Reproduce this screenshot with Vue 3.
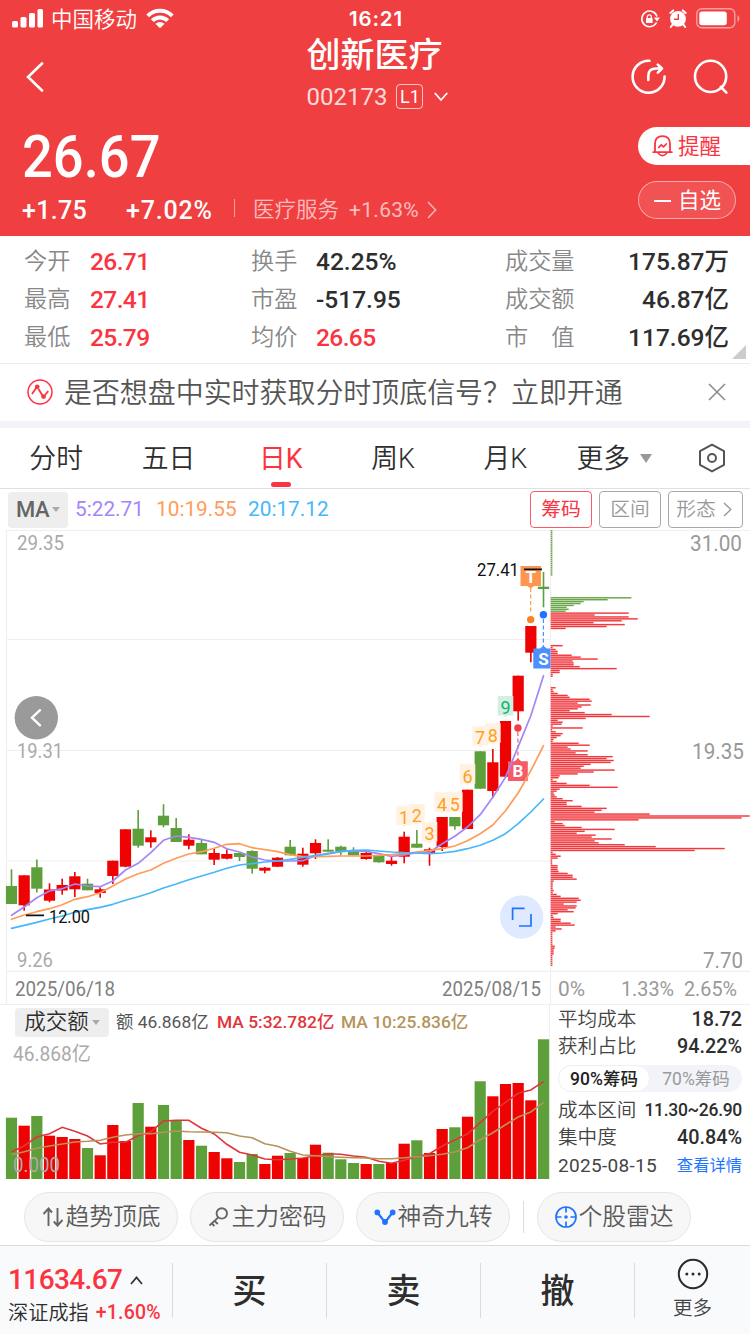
<script setup>
import { ref } from 'vue'

const stats = [
  ['今开', '26.71', true, '换手', '42.25%', false, '成交量', '175.87万'],
  ['最高', '27.41', true, '市盈', '-517.95', false, '成交额', '46.87亿'],
  ['最低', '25.79', true, '均价', '26.65', true, '市　值', '117.69亿'],
]

const tabs = ['分时', '五日', '日K', '周K', '月K']
const activeTab = ref('日K')
const chipRange = ref('90%')

const STEP = 12.667
const cx = (i) => 11.5 + i * STEP

// [up, wick top, body top, body bottom, wick bottom, volume top]
const candles = [
  [0, 869.3, 886, 904, 904, 1117.7],
  [1, 875.3, 875.3, 905.3, 910.7, 1125.7],
  [0, 859.5, 867.3, 888.7, 892.5, 1116],
  [1, 883.3, 889.5, 900.7, 902.3, 1135.7],
  [1, 878.7, 885, 890.5, 894.7, 1137],
  [1, 872, 876.3, 889.3, 897, 1139],
  [0, 878.7, 883.7, 890.3, 890.3, 1148],
  [1, 887.3, 889.3, 893, 897.7, 1155.3],
  [1, 860.7, 860.7, 876, 884, 1125],
  [1, 829.3, 829.3, 866.7, 867.3, 1141],
  [0, 810, 828.7, 845.7, 847.7, 1103],
  [1, 830.3, 837.3, 842.3, 847.7, 1126.7],
  [0, 804.3, 815.7, 825.3, 827.3, 1105],
  [0, 818, 828, 842, 842, 1120.7],
  [1, 834.3, 839.7, 845.7, 849.3, 1140],
  [0, 840, 843, 854.3, 854.3, 1145.7],
  [1, 848.7, 853, 859.7, 865, 1152],
  [1, 849.3, 854, 858.7, 859.3, 1158.3],
  [0, 853, 853, 857, 861, 1162],
  [0, 850.3, 851, 868.7, 873.7, 1154],
  [1, 867, 867.7, 870.7, 873.3, 1164],
  [1, 857, 857.7, 866.7, 867, 1155.7],
  [0, 840, 846.7, 855.3, 855.3, 1153],
  [1, 847.7, 853.7, 864.7, 866.7, 1158],
  [1, 839.3, 843, 853.3, 859, 1144.7],
  [0, 839.3, 849.7, 851.7, 851.7, 1152.7],
  [0, 845.7, 846.7, 851, 855.3, 1159.3],
  [0, 847.3, 850.7, 855.3, 855.3, 1163],
  [1, 851, 853, 859, 859.7, 1164],
  [0, 855, 855, 862.3, 862.7, 1164],
  [1, 856, 860.7, 864, 865.7, 1163],
  [1, 831.7, 836.7, 856.7, 863.3, 1143.7],
  [0, 830, 843.7, 847.7, 847.7, 1140.3],
  [1, 847.7, 849.3, 853, 865.7, 1153],
  [1, 817, 817, 847, 851, 1129],
  [0, 817, 817, 826.3, 829.7, 1127.3],
  [1, 789.7, 789.7, 829, 829, 1116.7],
  [0, 751.3, 751.3, 788.7, 788.7, 1081.3],
  [1, 749, 762.3, 791, 797.3, 1096.3],
  [1, 721, 721, 776.7, 776.7, 1084],
  [1, 675.7, 675.7, 711.3, 720.7, 1083],
  [1, 626, 626, 652.7, 662.3, 1100.3],
  [0, 572, 586.7, 589, 607.3, 1039.3],
]

const line = (ys) => ys.map((y, i) => `${cx(i).toFixed(1)},${y}`).join(' ')

const ma5 = line([
  915.3, 907, 897.7, 891, 888.7, 884, 886, 886.7, 881, 870, 863.3, 852.7, 840.3, 836, 837.3,
  839.3, 842.3, 848.7, 852, 857, 860, 861, 861, 860.7, 855.7, 853.3, 851.3, 851, 851.3, 853.7,
  856.3, 855, 852.7, 852.3, 843.7, 836.3, 827, 814.7, 797.3, 777.3, 746.7, 715.7, 675.7,
])
const ma10 = line([
  919.3, 915, 911.7, 908.7, 904.7, 899.3, 896.7, 892.7, 886, 879, 873.7, 870, 863.3, 858.3, 854,
  851.7, 848.3, 844.3, 843.7, 847.7, 849.7, 851.7, 854.7, 856.7, 856.7, 856.3, 856, 856, 856, 855.3,
  854.7, 853.7, 852, 850.7, 848.7, 846, 840.7, 833.7, 825, 810.7, 793, 770.7, 745.7,
])
const ma20 = line([
  928.3, 925.3, 922.3, 919, 916, 912.3, 909.7, 907.3, 904.3, 900.3, 896.7, 892.7, 888, 884, 879.7,
  876, 872.3, 868.3, 865, 863.7, 862, 861, 859.3, 857.3, 855.7, 854, 851.7, 850.3, 850, 851,
  852, 852.7, 853, 853.7, 853, 851.3, 848.7, 845.3, 840.3, 833.7, 823.7, 812, 799,
])
const volMa5 = line([
  1152, 1145.7, 1137, 1133.7, 1127.3, 1131.3, 1136, 1144, 1142.3, 1142.3, 1135.7, 1131.7, 1121, 1120.3, 1120.3,
  1128.3, 1134, 1144.3, 1152.3, 1155, 1159, 1159.7, 1159, 1158, 1156, 1153.7, 1154.3, 1156, 1157.3, 1161.3,
  1163.3, 1160.3, 1156.7, 1153.7, 1146, 1140, 1134, 1122.7, 1111.3, 1102.3, 1093.3, 1090, 1081.7,
])
const volMa10 = line([
  1154.7, 1151.7, 1148.3, 1146, 1144, 1142, 1141.3, 1140.3, 1137.3, 1135, 1133.7, 1133.7, 1132.3, 1131, 1131.7,
  1132, 1132.3, 1132.7, 1136, 1137.7, 1143.7, 1146.3, 1151.3, 1155, 1155.7, 1156.7, 1157.3, 1157.7, 1158, 1158.7,
  1158.7, 1157.7, 1156.7, 1155.7, 1154.3, 1152, 1147.7, 1139.7, 1132.7, 1124.7, 1117, 1112, 1102.3,
])

// nine-turn counters above the candles
const turns = [
  [31, 1, 805.7], [32, 2, 804], [33, 3, 822], [34, 4, 792.3], [35, 5, 792.3],
  [36, 6, 764.3], [37, 7, 726], [38, 8, 723.3], [39, 9, 696],
]

// chip distribution, one length per price level
const chips = [
  ...Array(24).fill(1.7), ...Array(11).fill(0),
  80.7, 57, 33, 30, 23, 16, 18, 15, 78, 44, 78, 87, 71, 43, 74, 56, 15,
  ...Array(8).fill(0),
  12, 2, 5, 7, 7, 21, 30, 47, 22, 23, 23, 29, 66, 9, 9, 2, 2,
  ...Array(5).fill(0),
  5, 2, 3, 7, 17, 19, 39, 41, 27, 40, 31, 27, 19, 34, 61, 99, 35, 7, 12, 11, 2, 32, 1.5, 5, 12, 10, 6, 3, 2,
  28, 39, 17, 20, 37, 25, 37, 62, 56, 63, 60, 40, 33, 30, 64, 43, 27, 9, 8, 2, 6, 16, 39, 67, 9, 6, 3, 4, 6,
  12, 22, 16, 16, 31, 56, 51, 44, 99, 199, 191, 88, 4, 12, 14, 31, 64, 34, 26, 45, 41, 61, 44, 48, 74, 105,
  174, 144, 2, 5, 10, 7, 1.5, 1.5, 1.5, 7, 7, 7, 8, 17, 22, 22, 26, 3, 2, 2, 2, 2, 3, 2, 6, 10, 28, 30, 26,
  13, 26, 25, 17, 23, 7, 2, 3, 10, 10, 20, 24, 5, 11, 5,
  ...Array(7).fill(1.7), 4, 4, 3, 3, 3, ...Array(6).fill(1.7),
]
</script>

<template>
  <div class="page">
    <header class="header">
      <div class="status">
        <div class="status-left">
          <svg width="32" height="20" viewBox="0 0 32 20" fill="#fff">
            <rect x="0" y="13" width="6" height="6.5" rx="1.6" />
            <rect x="8.5" y="9" width="6" height="10.5" rx="1.6" />
            <rect x="17" y="5" width="6" height="14.5" rx="1.6" />
            <rect x="25.5" y="1" width="5.5" height="18.5" rx="1.6" />
          </svg>
          <span class="carrier">中国移动</span>
          <svg width="28" height="21" viewBox="0 0 28 21" fill="none" stroke="#fff" stroke-width="3.9">
            <path d="M1.7 7.8 A17.5 17.5 0 0 1 26.3 7.8" />
            <path d="M6.3 12.6 A11 11 0 0 1 21.7 12.6" />
            <path d="M14 20.2 L9.4 15.8 A6.6 6.6 0 0 1 18.6 15.8 Z" fill="#fff" stroke="none" />
          </svg>
        </div>
        <span class="clock">16:21</span>
        <div class="status-right">
          <svg width="20" height="20" viewBox="0 0 20 20">
            <path d="M16.5 13.5 A7.8 7.8 0 1 1 17 7.4" fill="none" stroke="#fff" stroke-width="1.6" />
            <path d="M13.8 8.4 H20 L17 12.4 Z" fill="#fff" />
            <rect x="6" y="9" width="6.6" height="5" rx=".6" fill="#fff" />
            <path d="M7.3 9.4 V7.8 a2 2 0 0 1 4 0 V9.4" fill="none" stroke="#fff" stroke-width="1.2" />
          </svg>
          <svg width="18" height="19" viewBox="0 0 18 19">
            <circle cx="9" cy="9.8" r="7.9" fill="#fff" />
            <path d="M1.4 4 L4.2 1.4 M16.6 4 L13.8 1.4 M3.6 15.6 L1.8 18 M14.4 15.6 L16.2 18" stroke="#fff" stroke-width="2" stroke-linecap="round" />
            <path d="M9.3 5 V10.3 H5" fill="none" stroke="#f03f41" stroke-width="1.4" />
          </svg>
          <svg width="44" height="21" viewBox="0 0 44 21">
            <rect x=".8" y=".8" width="38" height="19" rx="5" fill="none" stroke="#fff" stroke-opacity=".5" stroke-width="1.4" />
            <rect x="3.3" y="3.4" width="27.5" height="13.8" rx="2.6" fill="#fff" />
            <path d="M41.5 7 q2 1.2 2 3.5 t-2 3.5 Z" fill="#fff" fill-opacity=".5" />
          </svg>
        </div>
      </div>

      <div class="nav">
        <svg class="back" width="18" height="30" viewBox="0 0 18 30" fill="none" stroke="#fff" stroke-width="2.6" stroke-linecap="round">
          <path d="M16 1.5 L2 15 L16 28.5" />
        </svg>
        <div class="title">
          <h1>创新医疗</h1>
          <div class="code">
            <span class="code-num">002173</span>
            <span class="level">L1</span>
            <svg width="14" height="10" viewBox="0 0 14 10" fill="none" stroke="#fff" stroke-width="1.8">
              <path d="M.8 1 L7 8 L13.2 1" />
            </svg>
          </div>
        </div>
        <div class="nav-icons">
          <svg width="36" height="36" viewBox="0 0 36 36" fill="none" stroke="#fff" stroke-width="2.6" stroke-linecap="round" stroke-linejoin="round">
            <path d="M18.4 1.8 A16 16 0 1 0 33.6 17.5" />
            <path d="M17.3 21 V17 Q17.3 9.5 25 9.5 H30.6 M26.8 5.6 L31 9.5 L26.8 13.6" />
          </svg>
          <svg width="36" height="36" viewBox="0 0 36 36" fill="none" stroke="#fff" stroke-width="2.6" stroke-linecap="round">
            <circle cx="17.6" cy="17.4" r="15.6" />
            <path d="M27.8 28 L33.4 33.6" />
          </svg>
        </div>
      </div>

      <div class="quote">
        <div class="quote-main">
          <div class="price">26.67</div>
          <div class="change">
            <span class="diff">+1.75</span>
            <span class="pct">+7.02%</span>
            <i class="bar"></i>
            <span class="sector">医疗服务</span>
            <span class="sector-pct">+1.63%</span>
            <svg width="10" height="18" viewBox="0 0 10 18" fill="none" stroke="#fff" stroke-opacity=".6" stroke-width="1.6">
              <path d="M1 1 L8.6 9 L1 17" />
            </svg>
          </div>
        </div>
        <div class="quote-actions">
          <button class="remind">
            <svg width="21" height="22" viewBox="0 0 21 22" fill="none" stroke="#fb3442" stroke-width="1.8" stroke-linecap="round" stroke-linejoin="round">
              <path d="M3 17 V9 Q3 1.2 10.5 1.2 T18 9 V17 M1.2 17.2 H19.8" />
              <path d="M6.5 18.5 Q10.5 22.8 14.5 18.5" />
              <path d="M6.8 12.4 L9.3 9.8 L11.5 11.8 L14.2 9" />
            </svg>
            <span>提醒</span>
          </button>
          <button class="watch"><i class="minus"></i>自选</button>
        </div>
      </div>
    </header>

    <section class="stats">
      <div v-for="row in stats" :key="row[0]" class="stat-row">
        <span class="label">{{ row[0] }}</span>
        <span class="value" :class="{ up: row[2] }">{{ row[1] }}</span>
        <span class="label">{{ row[3] }}</span>
        <span class="value" :class="{ up: row[5] }">{{ row[4] }}</span>
        <span class="label">{{ row[6] }}</span>
        <span class="value right">{{ row[7] }}</span>
      </div>
      <i class="corner"></i>
    </section>

    <section class="banner">
      <svg width="26" height="26" viewBox="0 0 26 26" fill="none" stroke="#fb3442" stroke-width="1.5">
        <circle cx="13" cy="13" r="12" />
        <path d="M5 15 L9.5 8.5 M11.5 10 L15.5 16.5 M18 16 L21.3 12.2" stroke-width="1.8" />
        <circle cx="10.2" cy="7.8" r="2.4" fill="#fb3442" stroke="none" />
        <circle cx="16.6" cy="17.6" r="2.4" fill="#fb3442" stroke="none" />
      </svg>
      <span class="banner-text">是否想盘中实时获取分时顶底信号？立即开通</span>
      <svg width="18" height="18" viewBox="0 0 18 18" stroke="#888" stroke-width="1.5">
        <path d="M1 1 L17 17 M17 1 L1 17" />
      </svg>
    </section>

    <nav class="tabs">
      <div v-for="t in tabs" :key="t" class="tab" :class="{ active: t === activeTab }" @click="activeTab = t">{{ t }}</div>
      <div class="more">更多<i class="tri"></i></div>
      <svg width="28" height="30" viewBox="0 0 28 30" fill="none" stroke="#555" stroke-width="2" stroke-linejoin="round">
        <path d="M14 1.6 L26 8.2 V21.8 L14 28.4 L2 21.8 V8.2 Z" />
        <circle cx="14" cy="15" r="4" />
      </svg>
    </nav>

    <section class="toolbar">
      <div class="ma-chip">MA<i class="tri small"></i></div>
      <span class="ma purple">5:22.71</span>
      <span class="ma orange">10:19.55</span>
      <span class="ma blue">20:17.12</span>
      <div class="tool-btns">
        <button class="tool on">筹码</button>
        <button class="tool">区间</button>
        <button class="tool wide">
          形态
          <svg width="9" height="15" viewBox="0 0 9 15" fill="none" stroke="#999" stroke-width="1.4">
            <path d="M1 1 L7.8 7.5 L1 14" />
          </svg>
        </button>
      </div>
    </section>

    <svg class="chart" width="750" height="474" viewBox="0 530 750 474">
      <g stroke="#efefef" stroke-width="1.2">
        <path d="M6 530.5 H750 M6 639.5 H550 M6 750.5 H550 M6 861 H550 M6 971.3 H750" />
        <path d="M6.5 530 V1004 M550.5 530 V1004" />
      </g>

      <g class="axis">
        <text x="17" y="550" textLength="47" lengthAdjust="spacingAndGlyphs">29.35</text>
        <text x="17" y="758.3" textLength="46" lengthAdjust="spacingAndGlyphs">19.31</text>
        <text x="17" y="966.6" textLength="36" lengthAdjust="spacingAndGlyphs">9.26</text>
      </g>

      <!-- chip distribution -->
      <template v-for="(w, k) in chips" :key="'c' + k">
        <rect v-if="w" x="550.7" :y="530.1 + k * 1.914" :width="w" height="1.45" :fill="k < 43 ? '#6aa64a' : '#f2393e'" />
      </template>

      <!-- candles -->
      <g v-for="(c, i) in candles" :key="'k' + i" :fill="c[0] ? '#ee0202' : '#5d9f3b'">
        <rect :x="cx(i) - 0.8" :y="c[1]" width="1.6" :height="c[4] - c[1]" />
        <rect :x="cx(i) - 5.6" :y="c[2]" width="11.2" :height="c[3] - c[2]" />
      </g>

      <g v-for="[i, n, y] in turns" :key="'t' + n">
        <path :d="`M${cx(i) - 7.8} ${y} h15.6 v19.5 h-5.8 l-2 2 l-2 -2 h-5.8 Z`" :fill="n === 9 ? '#d3efe2' : '#fff2e2'" />
        <text class="turn" :x="cx(i)" :y="y + 18.2" :fill="n === 9 ? '#12b36b' : '#ffa022'">{{ n }}</text>
      </g>

      <!-- B / T / S markers -->
      <path d="M517.9 732 V760" stroke="#f65a66" stroke-width="1.2" stroke-dasharray="4 2.5" />
      <circle cx="517.9" cy="728" r="3.7" fill="#f33e49" />
      <path d="M508 761.3 H514.5 L517.9 758.5 L521.3 761.3 H527.8 V781 H508 Z" fill="#f65a66" />
      <text class="mark" x="517.9" y="777.3">B</text>

      <path d="M530.7 588 V613" stroke="#ff9650" stroke-width="1.2" stroke-dasharray="4 2.5" />
      <circle cx="530.7" cy="619.6" r="3.7" fill="#ff8024" />
      <path d="M520.5 566 H541 V586 H534 L530.7 588.6 L527.4 586 H520.5 Z" fill="#ff9650" />
      <text class="mark" x="530.7" y="582.5">T</text>

      <path d="M543.4 619 V646" stroke="#4a90ff" stroke-width="1.2" stroke-dasharray="4 2.5" />
      <circle cx="543.4" cy="614.8" r="3.7" fill="#1e73ff" />
      <path d="M533.3 648.5 H540 L543.4 645.7 L546.8 648.5 H550.5 V668.4 H533.3 Z" fill="#4a90ff" />
      <text class="mark" x="543.4" y="664.5">S</text>

      <g fill="none" stroke-width="1.7" stroke-linejoin="round" stroke-linecap="round">
        <polyline :points="ma5" stroke="#a586f6" />
        <polyline :points="ma10" stroke="#ff9c58" />
        <polyline :points="ma20" stroke="#45b8fc" />
      </g>

      <path d="M524 569.4 H542 M26 915.4 H44" stroke="#111" stroke-width="1.6" />
      <text class="peak" x="477" y="576.3" textLength="42" lengthAdjust="spacingAndGlyphs">27.41</text>
      <text class="peak" x="49" y="922.6" textLength="41" lengthAdjust="spacingAndGlyphs">12.00</text>

      <g class="scale">
        <text x="690" y="551" textLength="52" lengthAdjust="spacingAndGlyphs">31.00</text>
        <text x="692" y="759.3" textLength="52" lengthAdjust="spacingAndGlyphs">19.35</text>
        <text x="703" y="967.7" textLength="40" lengthAdjust="spacingAndGlyphs">7.70</text>
      </g>
      <g class="percent">
        <text x="558" y="995.5" textLength="27" lengthAdjust="spacingAndGlyphs">0%</text>
        <text x="621" y="995.5" textLength="53" lengthAdjust="spacingAndGlyphs">1.33%</text>
        <text x="684" y="995.5" textLength="53" lengthAdjust="spacingAndGlyphs">2.65%</text>
      </g>
      <g class="date">
        <text x="15" y="995.5" textLength="100" lengthAdjust="spacingAndGlyphs">2025/06/18</text>
        <text x="442" y="995.5" textLength="99" lengthAdjust="spacingAndGlyphs">2025/08/15</text>
      </g>

      <circle cx="36.3" cy="717.7" r="21.7" fill="#8c8c8c" fill-opacity=".88" />
      <path d="M40 710.2 L32 717.7 L40 725.3" fill="none" stroke="#fff" stroke-width="2.4" stroke-linecap="round" />
      <circle cx="521.7" cy="917" r="21.7" fill="#dfe9ff" />
      <path d="M524.6 908.4 H512.6 V920 M519 926 H531 V914" fill="none" stroke="#1e73ff" stroke-width="1.7" />
    </svg>

    <section class="volume">
      <div class="vol-left">
        <div class="vol-head">
          <div class="vol-chip">成交额<i class="tri small"></i></div>
          <span class="v1">额 46.868亿</span>
          <span class="v2">MA 5:32.782亿</span>
          <span class="v3">MA 10:25.836亿</span>
        </div>
        <svg class="vol-chart" width="550" height="144" viewBox="0 1036 550 144">
          <rect v-for="(c, i) in candles" :key="i" :x="cx(i) - 5.6" :y="c[5]" width="11.2" :height="1179 - c[5]" :fill="c[0] ? '#ee0202' : '#5d9f3b'" />
          <polyline :points="volMa5" fill="none" stroke="#e0353a" stroke-width="1.6" />
          <polyline :points="volMa10" fill="none" stroke="#b5935a" stroke-width="1.6" />
          <g class="axis">
            <text x="13" y="1061" textLength="78" lengthAdjust="spacingAndGlyphs">46.868亿</text>
            <text x="13" y="1172.3" textLength="47" lengthAdjust="spacingAndGlyphs">0.000</text>
          </g>
        </svg>
      </div>
      <div class="vol-right">
        <div class="info"><span>平均成本</span><b>18.72</b></div>
        <div class="info"><span>获利占比</span><b>94.22%</b></div>
        <div class="switch">
          <span v-for="r in ['90%', '70%']" :key="r" :class="{ on: r === chipRange }" @click="chipRange = r">{{ r }}筹码</span>
        </div>
        <div class="info"><span>成本区间</span><b class="tight">11.30~26.90</b></div>
        <div class="info"><span>集中度</span><b>40.84%</b></div>
        <div class="info last"><span class="day">2025-08-15</span><a>查看详情</a></div>
      </div>
    </section>

    <section class="tools">
      <button class="pill">
        <svg width="24" height="24" viewBox="0 0 24 24" fill="none" stroke="#666" stroke-width="1.9">
          <path d="M7.5 21 V4 M2.5 9 L7.5 3.5 L11 7.5 M16.5 3 V20 M12.8 16.5 L16.5 20.5 L21.5 15" />
        </svg>
        <span>趋势顶底</span>
      </button>
      <button class="pill">
        <svg width="24" height="24" viewBox="0 0 24 24" fill="none" stroke="#666" stroke-width="1.9">
          <circle cx="14.8" cy="8.4" r="5.2" />
          <path d="M11.3 12.4 L2.5 20.5 M7.6 15.8 L10.8 19 M4.8 18.4 L7.4 21" />
        </svg>
        <span>主力密码</span>
      </button>
      <button class="pill">
        <svg width="24" height="24" viewBox="0 0 24 24" fill="#1e73ff">
          <path d="M4.5 7.5 L12 17.5 L19.5 7.5" fill="none" stroke="#1e73ff" stroke-width="2.2" />
          <circle cx="4.3" cy="7.4" r="2.8" />
          <circle cx="12" cy="17" r="2.9" />
          <circle cx="19.7" cy="7.4" r="2.8" />
        </svg>
        <span>神奇九转</span>
      </button>
      <i class="split"></i>
      <button class="pill">
        <svg width="24" height="24" viewBox="0 0 24 24" fill="none" stroke="#1e73ff" stroke-width="1.7">
          <circle cx="12" cy="12" r="10" />
          <path d="M12 2 V7.5 M12 16.5 V22 M2 12 H7.5 M16.5 12 H22" />
          <circle cx="12" cy="12" r="1.8" fill="#1e73ff" stroke="none" />
        </svg>
        <span>个股雷达</span>
      </button>
    </section>

    <footer class="bottom">
      <div class="index">
        <div class="index-top">
          <span class="index-num">11634.67</span>
          <svg width="13" height="9" viewBox="0 0 13 9" fill="none" stroke="#333" stroke-width="1.8">
            <path d="M1 8 L6.5 1.5 L12 8" />
          </svg>
        </div>
        <div class="index-sub">深证成指<span>+1.60%</span></div>
      </div>
      <div class="act">买</div>
      <div class="act">卖</div>
      <div class="act">撤</div>
      <div class="act-more">
        <svg width="32" height="32" viewBox="0 0 32 32">
          <circle cx="16" cy="16" r="14.2" fill="none" stroke="#2b2b2b" stroke-width="2" />
          <g fill="#2b2b2b">
            <circle cx="9.8" cy="16" r="1.5" />
            <circle cx="16" cy="16" r="1.5" />
            <circle cx="22.2" cy="16" r="1.5" />
          </g>
        </svg>
        <span>更多</span>
      </div>
    </footer>
  </div>
</template>

<style>
body {
  margin: 0;
  background: #fff;
}
</style>

<style scoped>
.page {
  width: 750px;
  height: 1334px;
  overflow: hidden;
  display: flex;
  flex-direction: column;
  font-family: Roboto, "Noto Sans CJK SC", sans-serif;
  color: #2e2e2e;
  line-height: 1;
  white-space: nowrap;
}

svg {
  display: block;
  flex: none;
}

button {
  font-family: inherit;
  line-height: 1;
  padding: 0;
  box-sizing: border-box;
  cursor: pointer;
  white-space: nowrap;
}

.header {
  height: 236px;
  background: #f03f41;
  color: #fff;
}

.status {
  height: 36px;
  display: grid;
  grid-template-columns: 1fr auto 1fr;
  align-items: center;
  padding: 0 10px 0 12px;
}

.status-left,
.status-right {
  display: flex;
  align-items: center;
}

.carrier {
  font-size: 21.5px;
  font-weight: 350;
  margin: 3px 9px 0 7px;
}

.clock {
  font-family: Inter, sans-serif;
  font-size: 20.5px;
  font-weight: 600;
  letter-spacing: 0.8px;
  padding-top: 2px;
}

.status-right {
  justify-content: flex-end;
  gap: 9px;
  padding-top: 1px;
}

.nav {
  height: 82px;
  display: grid;
  grid-template-columns: 1fr auto 1fr;
  align-items: center;
  padding: 0 21px 0 26px;
}

.title {
  width: 142px;
}

h1 {
  margin: 0;
  height: 38px;
  line-height: 39px;
  font-size: 34px;
  font-weight: 500;
}

.code {
  height: 44px;
  display: flex;
  align-items: center;
  padding-top: 2px;
  box-sizing: border-box;
}

.code-num {
  font-size: 24px;
  opacity: 0.8;
}

.level {
  margin: -2px 11px 0 9px;
  width: 25px;
  height: 23px;
  border: 1px solid rgba(255, 255, 255, 0.7);
  border-radius: 4px;
  font-size: 18px;
  line-height: 24px;
  text-align: center;
}

.nav-icons {
  display: flex;
  justify-content: flex-end;
  gap: 26px;
}

.quote {
  display: flex;
  justify-content: space-between;
}

.quote-main {
  padding: 10px 0 0 22px;
}

.price {
  height: 58px;
  line-height: 57px;
  font-size: 59px;
  font-weight: 500;
  transform: scaleX(0.92);
  transform-origin: 0 50%;
}

.change {
  margin-top: 10px;
  height: 28px;
  display: flex;
  align-items: center;
  font-weight: 500;
}

.diff {
  width: 104px;
  font-size: 25px;
  letter-spacing: 0.3px;
}

.pct {
  width: 108px;
  font-size: 25px;
  letter-spacing: 0.8px;
}

.bar {
  width: 1px;
  height: 18px;
  background: rgba(255, 255, 255, 0.5);
  margin-top: -4px;
}

.sector {
  margin-left: 18px;
  font-size: 21.5px;
  font-weight: 350;
  opacity: 0.65;
}

.sector-pct {
  margin: 0 8px 0 10px;
  font-size: 21px;
  font-weight: 400;
  letter-spacing: 0.3px;
  opacity: 0.65;
}

.quote-actions {
  width: 112px;
  padding-top: 9px;
}

.remind {
  width: 112px;
  height: 38px;
  border: 0;
  border-radius: 19px 0 0 19px;
  background: #fff;
  color: #fb3442;
  font-size: 21.5px;
  font-weight: 400;
  display: flex;
  align-items: center;
  gap: 5px;
  padding: 0 0 0 14px;
}

.remind span {
  padding-top: 2px;
}

.watch {
  margin-top: 16px;
  width: 98px;
  height: 38px;
  border: 1px solid rgba(255, 255, 255, 0.5);
  border-radius: 19px;
  background: rgba(255, 255, 255, 0.1);
  color: #fff;
  font-size: 21.5px;
  font-weight: 400;
  display: flex;
  align-items: center;
  padding: 2px 0 0 15px;
}

.minus {
  width: 17px;
  height: 2px;
  background: #fff;
  margin-right: 7px;
}

.stats {
  height: 127px;
  box-sizing: border-box;
  padding: 6px 21px 0 24px;
  position: relative;
}

.stat-row {
  height: 38px;
  display: grid;
  grid-template-columns: 66px 161px 65px 189px 80px 1fr;
  align-items: center;
}

.label {
  font-size: 23.2px;
  font-weight: 350;
  color: #888;
  padding-top: 2px;
}

.value {
  font-size: 24.5px;
  font-weight: 500;
  letter-spacing: 0;
  padding-top: 3px;
}

.value.up {
  color: #fb3442;
  letter-spacing: -0.6px;
}

.value.right {
  text-align: right;
}

.corner {
  position: absolute;
  right: 4px;
  bottom: 4px;
  border-left: 14px solid transparent;
  border-bottom: 14px solid #ccc;
}

.banner {
  height: 65px;
  box-sizing: border-box;
  border-top: 1px solid #ebebeb;
  border-bottom: 7px solid #f2f4f9;
  display: flex;
  align-items: center;
  padding: 0 24px 1px 27px;
}

.banner-text {
  flex: 1;
  margin-left: 11px;
  padding-top: 4px;
  font-size: 27.95px;
  font-weight: 350;
  color: #555;
}

.tabs {
  height: 61px;
  box-sizing: border-box;
  border-bottom: 1px solid #e0e0e0;
  display: flex;
  align-items: center;
  padding: 0 24px 0 0;
  font-size: 26.8px;
  font-weight: 350;
}

.tab {
  width: 112.3px;
  height: 60px;
  line-height: 63px;
  text-align: center;
  display: flex;
  flex-direction: column;
  align-items: center;
}

.tab.active {
  color: #fb3442;
  font-weight: 400;
}

.tab.active::after {
  content: "";
  width: 20px;
  height: 5px;
  border-radius: 2.5px;
  background: #fb3442;
  margin-top: -9px;
}

.more {
  flex: 1;
  margin-left: 15px;
  padding-top: 2px;
  display: flex;
  align-items: center;
}

.tri {
  border: 6.5px solid transparent;
  border-top: 9px solid #999;
  border-bottom: 0;
  margin-left: 10px;
}

.tri.small {
  border-width: 5px 4.5px 0;
  border-top-color: #aaa;
  margin-left: 3px;
}

.toolbar {
  height: 41px;
  display: flex;
  align-items: center;
  padding: 0 7px 0 8px;
}

.ma-chip {
  width: 60px;
  height: 36px;
  border-radius: 4px;
  background: #eee;
  color: #666;
  font-size: 22px;
  font-weight: 500;
  display: flex;
  align-items: center;
  justify-content: center;
  letter-spacing: -0.6px;
}

.ma {
  font-size: 20.8px;
  font-weight: 400;
}

.purple {
  width: 81px;
  margin-left: 7px;
  color: #a586f6;
}

.orange {
  width: 92px;
  color: #ff9c58;
}

.blue {
  color: #45b8fc;
}

.tool-btns {
  margin-left: auto;
  display: flex;
  gap: 7px;
}

.tool {
  width: 62px;
  height: 37px;
  border: 1px solid #aaa;
  border-radius: 4px;
  background: #fff;
  color: #999;
  font-size: 19.8px;
  font-weight: 350;
}

.tool.on {
  border-color: #fb5a66;
  color: #fb3442;
  font-weight: 400;
}

.tool.wide {
  width: 75px;
  display: flex;
  align-items: center;
  justify-content: center;
  gap: 7px;
  padding-right: 3px;
}

.chart text,
.vol-chart text {
  font-family: Roboto, "Noto Sans CJK SC", sans-serif;
}

.axis text {
  font-size: 20px;
  fill: #aaa;
}

.scale text {
  font-size: 22.5px;
  fill: #999;
}

.percent text {
  font-size: 20px;
  fill: #999;
}

.date text {
  font-size: 20px;
  fill: #808080;
}

.peak {
  font-size: 18px;
  fill: #111;
}

.turn {
  font-size: 18px;
  text-anchor: middle;
}

.mark {
  font-size: 17px;
  font-weight: 700;
  fill: #fff;
  text-anchor: middle;
}

.volume {
  height: 176px;
  box-sizing: border-box;
  border-top: 1px solid #efefef;
  display: flex;
}

.vol-left {
  width: 550px;
  border-right: 1px solid #efefef;
  box-sizing: border-box;
}

.vol-head {
  height: 31px;
  display: flex;
  align-items: center;
  padding: 3px 0 0 15px;
  box-sizing: border-box;
  font-size: 17.4px;
  font-weight: 500;
}

.vol-head span {
  padding-top: 2px;
}

.vol-chip {
  width: 94px;
  height: 29px;
  border-radius: 4px;
  background: #eee;
  display: flex;
  align-items: center;
  justify-content: center;
  font-size: 21.5px;
  font-weight: 350;
}

.v1 {
  width: 101px;
  margin-left: 7px;
  color: #555;
  font-weight: 400;
}

.v2 {
  width: 124px;
  color: #e0353a;
}

.v3 {
  color: #b5935a;
}

.vol-right {
  flex: 1;
  padding: 1px 8px 0 8px;
}

.info {
  height: 27.5px;
  display: flex;
  align-items: center;
  justify-content: space-between;
  font-size: 19.6px;
  font-weight: 350;
  color: #444;
}

.info b {
  font-size: 19.8px;
  font-weight: 500;
  color: #2e2e2e;
}

.info b.tight {
  font-size: 17.5px;
  letter-spacing: -0.3px;
}

.info .day {
  font-size: 19px;
  font-weight: 400;
  letter-spacing: 0.3px;
}

.info a {
  font-size: 16.3px;
  font-weight: 400;
  color: #1e73ff;
}

.switch {
  height: 27px;
  margin: 4px 0 5px;
  border-radius: 14px;
  background: #f2f4f9;
  display: flex;
  font-size: 17.5px;
  color: #999;
}

.switch span {
  width: 92px;
  border-radius: 14px;
  text-align: center;
  line-height: 28px;
}

.switch .on {
  background: #fff;
  border: 1px solid #eef0f5;
  line-height: 26px;
  box-sizing: border-box;
  color: #222;
  font-weight: 500;
}

.tools {
  height: 65px;
  box-sizing: border-box;
  display: flex;
  align-items: flex-start;
  padding: 12px 0 0 24px;
  gap: 12px;
}

.pill {
  width: 154px;
  height: 50px;
  border: 1px solid #e6e6e6;
  border-radius: 25px;
  background: #f7f7f7;
  color: #5a5a5a;
  font-size: 23.8px;
  font-weight: 350;
  display: flex;
  align-items: center;
  justify-content: center;
}

.pill span {
  padding-top: 2px;
}

.split {
  width: 1px;
  height: 32px;
  background: #ddd;
  margin: 9px 1px 0;
}

.bottom {
  height: 89px;
  box-sizing: border-box;
  border-top: 1px solid #d8dade;
  background: #f9fafc;
  display: flex;
  align-items: center;
}

.index {
  width: 172px;
  padding: 12px 0 0 8px;
  box-sizing: border-box;
}

.index-top {
  height: 34px;
  display: flex;
  align-items: center;
  gap: 8px;
}

.index-num {
  font-size: 28px;
  font-weight: 500;
  color: #fb3442;
  letter-spacing: -0.6px;
}

.index-sub {
  height: 32px;
  display: flex;
  align-items: center;
  font-size: 20.2px;
  font-weight: 350;
}

.index-sub span {
  margin-left: 7px;
  color: #fb3442;
  font-weight: 500;
  font-size: 19.5px;
  letter-spacing: 0.2px;
}

.act {
  width: 154px;
  height: 55px;
  box-sizing: border-box;
  border-left: 1px solid #d8dade;
  line-height: 57px;
  text-align: center;
  font-size: 34px;
  font-weight: 500;
}

.act-more {
  flex: 1;
  height: 55px;
  border-left: 1px solid #d8dade;
  display: flex;
  flex-direction: column;
  align-items: center;
  justify-content: center;
  gap: 9px;
  box-sizing: border-box;
  padding-bottom: 3px;
  font-size: 19.5px;
  font-weight: 350;
  color: #444;
}
</style>
